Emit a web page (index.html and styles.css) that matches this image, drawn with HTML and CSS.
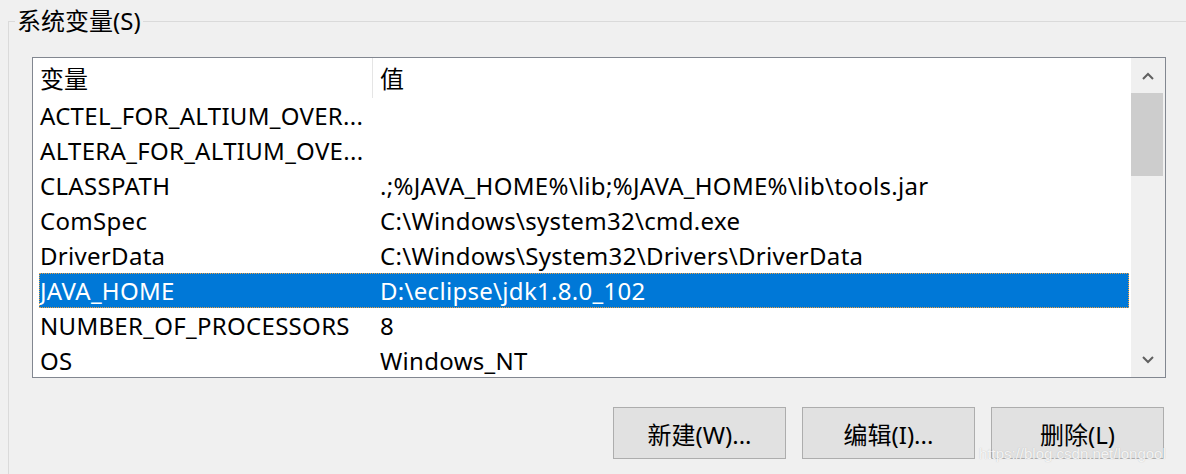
FILE: index.html
```html
<!DOCTYPE html>
<html lang="zh-CN">
<head>
<meta charset="utf-8">
<title>系统变量</title>
<link rel="stylesheet" href="styles.css">
</head>
<body>
<fieldset class="group">
  <legend class="group-title">系统变量(S)</legend>
  <div class="listbox">
    <div class="list-main">
      <div class="list-header">
        <div class="hcol hcol-name">变量</div>
        <div class="hcol hcol-value">值</div>
      </div>
      <div class="rows">
        <div class="row"><span class="c1">ACTEL_FOR_ALTIUM_OVER...</span><span class="c2"></span></div>
        <div class="row"><span class="c1">ALTERA_FOR_ALTIUM_OVE...</span><span class="c2"></span></div>
        <div class="row"><span class="c1">CLASSPATH</span><span class="c2">.;%JAVA_HOME%\lib;%JAVA_HOME%\lib\tools.jar</span></div>
        <div class="row"><span class="c1">ComSpec</span><span class="c2">C:\Windows\system32\cmd.exe</span></div>
        <div class="row"><span class="c1">DriverData</span><span class="c2">C:\Windows\System32\Drivers\DriverData</span></div>
        <div class="row selected"><span class="c1">JAVA_HOME</span><span class="c2">D:\eclipse\jdk1.8.0_102</span></div>
        <div class="row"><span class="c1">NUMBER_OF_PROCESSORS</span><span class="c2">8</span></div>
        <div class="row"><span class="c1">OS</span><span class="c2">Windows_NT</span></div>
      </div>
    </div>
    <div class="scrollbar">
      <div class="sb-btn">
        <svg width="12" height="8" viewBox="0 0 12 8"><path d="M1 7 L6 2 L11 7" fill="none" stroke="#606060" stroke-width="2"/></svg>
      </div>
      <div class="sb-thumb"></div>
      <div class="sb-track"></div>
      <div class="sb-btn">
        <svg width="12" height="8" viewBox="0 0 12 8"><path d="M1 1 L6 6 L11 1" fill="none" stroke="#606060" stroke-width="2"/></svg>
      </div>
    </div>
  </div>
  <div class="buttons">
    <button class="btn">新建(W)...</button>
    <button class="btn">编辑(I)...</button>
    <button class="btn">删除(L)</button>
  </div>
</fieldset>
<div class="watermark">https://blog.csdn.net/longool</div>
</body>
</html>
```
FILE: styles.css
```css
html, body {
  margin: 0;
  padding: 0;
  width: 1186px;
  height: 474px;
  overflow: hidden;
  background: #f0f0f0;
  font-family: "Noto Sans", "Noto Sans CJK SC", sans-serif;
  color: #000;
}
body { position: relative; }

.group {
  box-sizing: border-box;
  margin: 7px 0 0 8px;
  padding: 0 0 0 23px;
  width: 1178px;
  height: 467px;
  border: 1px solid #dadada;
  border-right: none;
  border-bottom: none;
  min-width: 0;
}
.group-title {
  margin-left: -17px;
  padding: 0 2px;
  font-size: 24px;
  line-height: 28px;
}

.listbox {
  box-sizing: border-box;
  margin-top: 22px;
  width: 1134px;
  height: 321px;
  border: 1px solid #828790;
  background: #fff;
  display: flex;
}
.list-main {
  flex: 1;
  display: flex;
  flex-direction: column;
  overflow: hidden;
}
.list-header {
  height: 40px;
  display: flex;
  flex: none;
}
.hcol {
  font-size: 24px;
  line-height: 42px;
}
.hcol-name {
  width: 332px;
  padding-left: 7px;
  border-right: 1px solid #e5e5e5;
}
.hcol-value {
  padding-left: 7px;
}
.rows {
  padding-left: 6px;
  margin-right: 1px;
}
.row {
  height: 35px;
  display: flex;
  align-items: center;
  font-size: 24px;
  letter-spacing: 0.3px;
  white-space: nowrap;
}
.row .c1 {
  width: 333px;
  padding-left: 1px;
  box-sizing: border-box;
  overflow: hidden;
  flex: none;
}
.row .c2 {
  padding-left: 8px;
}
.row.selected {
  background: #0078d7;
  color: #fff;
  outline: 1px dotted #f0a040;
  outline-offset: -1px;
}

.scrollbar {
  width: 34px;
  margin-left: 1px;
  background: #f0f0f0;
  display: flex;
  flex-direction: column;
  flex: none;
}
.sb-btn {
  height: 35px;
  display: flex;
  align-items: center;
  justify-content: center;
  flex: none;
}
.sb-thumb {
  height: 83px;
  width: 32px;
  background: #cdcdcd;
  flex: none;
}
.sb-track { flex: 1; }

.buttons {
  margin-top: 29px;
  margin-right: 22px;
  display: flex;
  justify-content: flex-end;
  gap: 16px;
}
.btn {
  box-sizing: border-box;
  width: 173px;
  height: 52px;
  border: 1px solid #adadad;
  background: #e1e1e1;
  font-family: "Noto Sans", "Noto Sans CJK SC", sans-serif;
  font-size: 24px;
  color: #000;
  padding: 0;
}

.watermark {
  position: absolute;
  left: 979px;
  top: 445px;
  font-family: "Liberation Sans", sans-serif;
  font-size: 15px;
  color: rgba(255, 255, 255, 0.85);
  text-shadow: 0 0 1px rgba(150, 150, 150, 0.6);
  white-space: nowrap;
}
```
